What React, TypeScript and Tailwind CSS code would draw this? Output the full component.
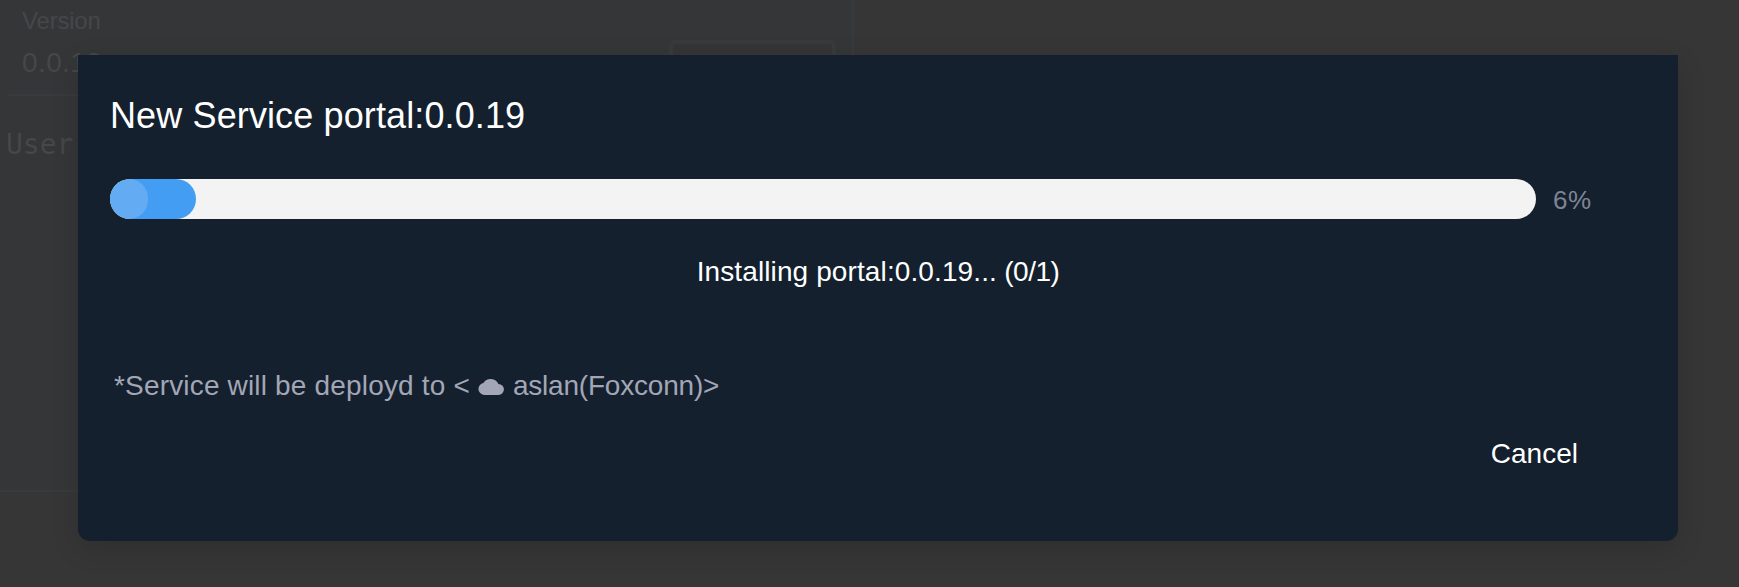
import React from "react";

function BackgroundPage() {
  return (
    <div className="h-[587px] overflow-hidden bg-[#363636]">
      <section className="h-[492px] w-[854px] border-r-2 border-b-2 border-[#393a3d] bg-[#353638] pt-[7px] pl-[7px] text-[#464749]">
        <div className="flex items-start justify-between border-b-2 border-[#393a3d] pl-4 pr-4">
          <div className="h-[87px]">
            <div className="-ml-px text-[24px] leading-[28px] tracking-[-0.2px]">Version</div>
            <div className="mt-[11px] -ml-px text-[28px] leading-[34px] tracking-[0.4px]">0.0.18</div>
          </div>
          <div className="mt-[33px] -mb-1 h-[52px] w-[167px] rounded-md border-4 border-[#393a3d] bg-[#353536]" />
        </div>
        <div className="mt-[32px] -ml-px font-['DejaVu_Sans_Mono',monospace] text-[28px] leading-[34px]">User</div>
      </section>
    </div>
  );
}

function ProgressBar({ percent }: { percent: number }) {
  return (
    <div className="flex items-center">
      <div className="h-10 w-[1426px] overflow-hidden rounded-full bg-[#f3f3f3]">
        <div className="h-full overflow-hidden rounded-full bg-[#439df2]" style={{ width: `${percent}%` }}>
          <div className="h-full w-[38px] rounded-full bg-[#63acf3]" />
        </div>
      </div>
      <span className="mt-0.5 ml-[17px] text-[26px] leading-[30px] tracking-[0.4px] text-[#7f8494]">{percent}%</span>
    </div>
  );
}

function CloudIcon() {
  return (
    <svg viewBox="0 0 26 18" className="mr-[9px] ml-[8px] h-[18px] w-[26px]" fill="currentColor" aria-hidden="true">
      <path d="M6 17.9A6 6 0 0 1 5.4 6A8.3 7.8 0 0 1 20.4 6.9A5.5 5.5 0 0 1 20.5 17.9Z" />
    </svg>
  );
}

export default function App() {
  return (
    <main className="relative h-[587px] w-[1739px] overflow-hidden font-['Liberation_Sans',Arial,sans-serif]">
      <BackgroundPage />
      <div
        role="dialog"
        className="absolute top-[55px] left-[78px] flex h-[486px] w-[1600px] flex-col rounded-b-xl bg-[#14202d] px-8 text-white shadow-[0_8px_28px_rgba(0,0,0,0.14)]"
      >
        <h1 className="mt-10 text-[36px] leading-[42px] tracking-[0.12px] whitespace-nowrap">New Service portal:0.0.19</h1>
        <div className="mt-[42px]">
          <ProgressBar percent={6} />
        </div>
        <p className="mt-[36px] text-center text-[28px] leading-[34px]">
          <span className="tracking-[0.11px]">Installing portal:0.0.19...</span>
          <span className="tracking-[-0.5px]"> (0/1)</span>
        </p>
        <div className="mt-[80px] flex items-center pl-1 text-[28px] leading-[34px] text-[#a2a6b6]">
          <span className="tracking-[0.17px]">*Service will be deployd to &lt;</span>
          <CloudIcon />
          <span className="tracking-[-0.2px]">aslan(Foxconn)&gt;</span>
        </div>
        <button className="mt-[34px] mr-[68px] self-end text-[28px] leading-[34px]">Cancel</button>
      </div>
    </main>
  );
}
